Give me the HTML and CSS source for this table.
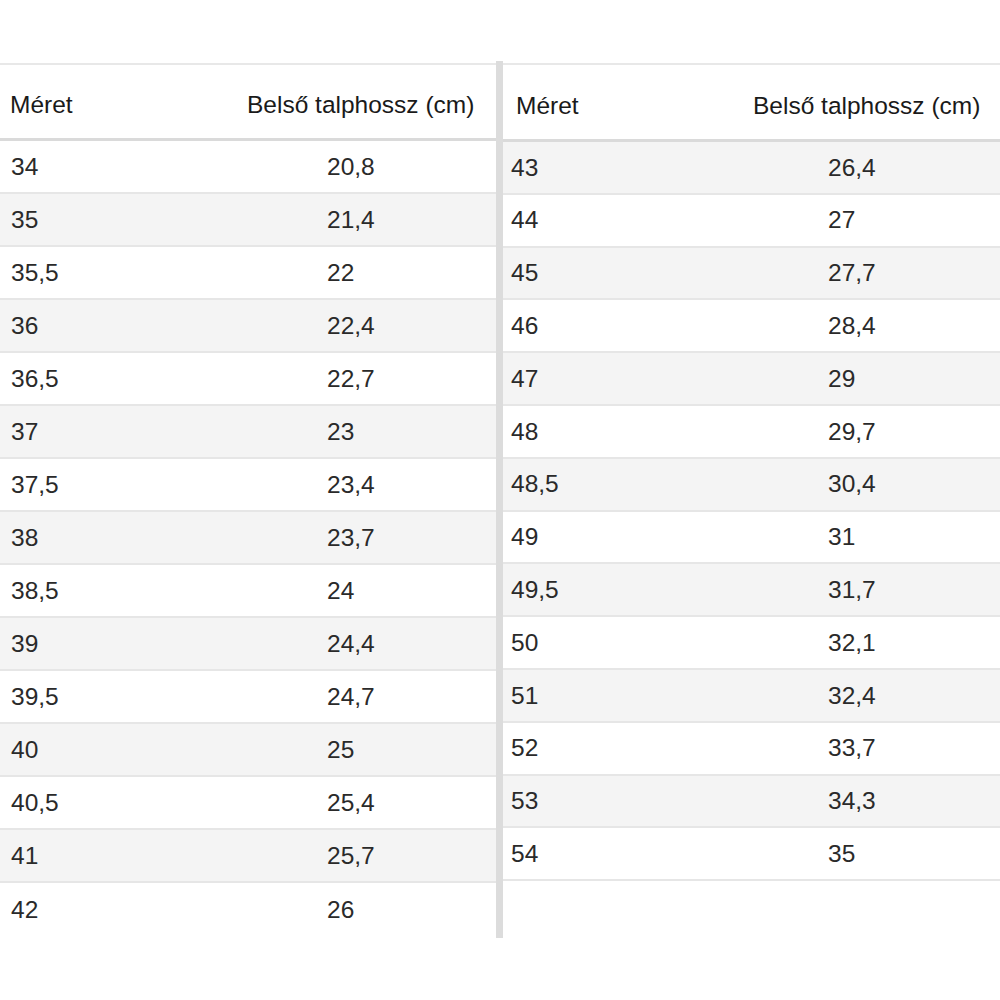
FILE: index.html
```html
<!DOCTYPE html>
<html lang="hu">
<head>
<meta charset="utf-8">
<title>Méret táblázat</title>
<link rel="stylesheet" href="styles.css">
</head>
<body>
<div class="sheet">
  <div class="table left">
    <div class="row head"><div class="c1">Méret</div><div class="c2">Belső talphossz (cm)</div></div>
    <div class="row"><div class="c1">34</div><div class="c2">20,8</div></div>
    <div class="row"><div class="c1">35</div><div class="c2">21,4</div></div>
    <div class="row"><div class="c1">35,5</div><div class="c2">22</div></div>
    <div class="row"><div class="c1">36</div><div class="c2">22,4</div></div>
    <div class="row"><div class="c1">36,5</div><div class="c2">22,7</div></div>
    <div class="row"><div class="c1">37</div><div class="c2">23</div></div>
    <div class="row"><div class="c1">37,5</div><div class="c2">23,4</div></div>
    <div class="row"><div class="c1">38</div><div class="c2">23,7</div></div>
    <div class="row"><div class="c1">38,5</div><div class="c2">24</div></div>
    <div class="row"><div class="c1">39</div><div class="c2">24,4</div></div>
    <div class="row"><div class="c1">39,5</div><div class="c2">24,7</div></div>
    <div class="row"><div class="c1">40</div><div class="c2">25</div></div>
    <div class="row"><div class="c1">40,5</div><div class="c2">25,4</div></div>
    <div class="row"><div class="c1">41</div><div class="c2">25,7</div></div>
    <div class="row"><div class="c1">42</div><div class="c2">26</div></div>
  </div>
  <div class="divider"></div>
  <div class="table right">
    <div class="row head"><div class="c1">Méret</div><div class="c2">Belső talphossz (cm)</div></div>
    <div class="row"><div class="c1">43</div><div class="c2">26,4</div></div>
    <div class="row"><div class="c1">44</div><div class="c2">27</div></div>
    <div class="row"><div class="c1">45</div><div class="c2">27,7</div></div>
    <div class="row"><div class="c1">46</div><div class="c2">28,4</div></div>
    <div class="row"><div class="c1">47</div><div class="c2">29</div></div>
    <div class="row"><div class="c1">48</div><div class="c2">29,7</div></div>
    <div class="row"><div class="c1">48,5</div><div class="c2">30,4</div></div>
    <div class="row"><div class="c1">49</div><div class="c2">31</div></div>
    <div class="row"><div class="c1">49,5</div><div class="c2">31,7</div></div>
    <div class="row"><div class="c1">50</div><div class="c2">32,1</div></div>
    <div class="row"><div class="c1">51</div><div class="c2">32,4</div></div>
    <div class="row"><div class="c1">52</div><div class="c2">33,7</div></div>
    <div class="row"><div class="c1">53</div><div class="c2">34,3</div></div>
    <div class="row"><div class="c1">54</div><div class="c2">35</div></div>
  </div>
</div>
</body>
</html>
```
FILE: styles.css
```css
html, body {
  margin: 0;
  padding: 0;
  background: #ffffff;
}

body {
  font-family: "Liberation Sans", Arial, sans-serif;
  font-size: 24.5px;
  color: #222222;
  width: 1000px;
  height: 1000px;
  overflow: hidden;
}

.sheet {
  display: flex;
  align-items: flex-start;
  margin-top: 61px;
}

.divider {
  width: 7px;
  height: 877px;
  background: #dcdcdc;
  flex: none;
}

.table {
  margin-top: 2px;
  border-top: 2px solid #e8e8e8;
  flex: none;
}

.left {
  width: 496px;
}

.right {
  width: 497px;
}

.row {
  display: grid;
  align-items: center;
  box-sizing: border-box;
  height: 53px;
  border-bottom: 2px solid #e6e6e6;
  line-height: 1;
  color: #2a2a2a;
  padding-top: 1px;
}

.row.head {
  height: 76px;
  border-bottom: 3px solid #dadada;
  padding-top: 8px;
  color: #1a1a1a;
}

.left .row {
  grid-template-columns: 237px 1fr;
}

.right .row {
  grid-template-columns: 240px 1fr;
  height: 52.8px;
}

.right .row.head {
  height: 77px;
}

.left .row:nth-child(2n+3),
.right .row:nth-child(2n+2) {
  background: #f4f4f4;
}

.left .row:last-child {
  border-bottom: none;
}

.left .c1 { padding-left: 11px; }
.left .c2 { padding-left: 90px; }
.left .head .c1 { padding-left: 10px; }
.left .head .c2 { padding-left: 10px; }

.right .c1 { padding-left: 8px; }
.right .c2 { padding-left: 85px; }
.right .head .c1 { padding-left: 13px; }
.right .head .c2 { padding-left: 10px; }
```
